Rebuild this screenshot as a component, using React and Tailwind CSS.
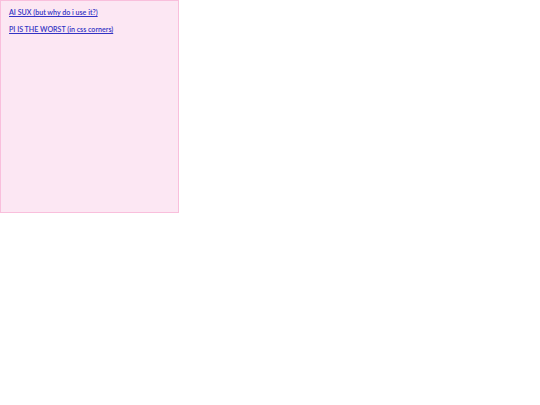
import React from "react";

const links = [
  { label: "AI SUX (but why do i use it?)", href: "#" },
  { label: "PI IS THE WORST (in css corners)", href: "#" },
];

const App = () => {
  return (
    <div className="w-[179px] h-[213px] bg-[#fce7f3] border border-[#f9bfdc] px-[8px] pt-[7px] flex flex-col gap-[8px] font-['Lato',sans-serif]">
      {links.map((link, index) => (
        <a
          key={index}
          href={link.href}
          className="text-[7.1px] leading-[9px] font-semibold text-[#3333c4] underline"
        >
          {link.label}
        </a>
      ))}
    </div>
  );
};

export default App;
